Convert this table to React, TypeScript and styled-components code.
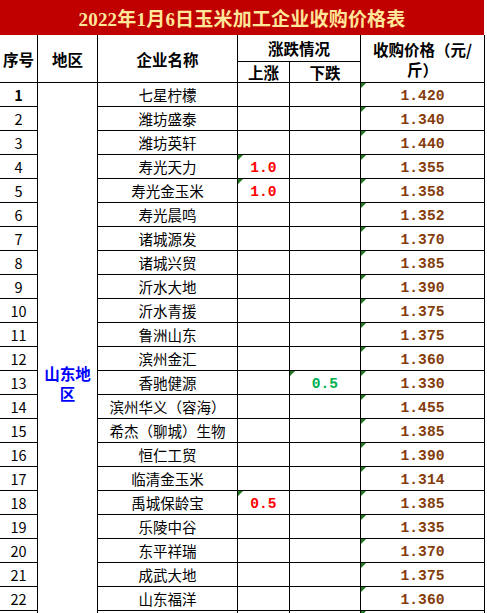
import * as React from 'react';
import styled, { createGlobalStyle, css } from 'styled-components';

const GlobalStyle = createGlobalStyle`
  html, body {
    margin: 0;
    padding: 0;
    background: #ffffff;
  }
  body {
    font-family: "Noto Sans CJK SC", "Noto Sans", sans-serif;
    color: #000000;
    overflow: hidden;
  }
`;

const Sheet = styled.div`
  width: 487px;
  height: 613px;
  overflow: hidden;
`;

const Title = styled.div`
  width: 484px;
  height: 35px;
  background: #c00000;
  color: #ffe699;
  display: flex;
  align-items: center;
  justify-content: center;
  font-family: "Liberation Serif", "Noto Sans CJK SC", serif;
  font-weight: bold;
  font-size: 19px;
  letter-spacing: 0.2px;
`;

const Table = styled.table`
  border-collapse: separate;
  border-spacing: 0;
  table-layout: fixed;
  width: 485px;
`;

const HeadRow = styled.tr<{ $h: number }>`
  height: ${p => p.$h}px;
`;

const Row = styled.tr`
  height: 24px;
`;

const Cell = styled.td<{ $noBottom?: boolean; $flag?: boolean }>`
  position: relative;
  box-sizing: border-box;
  padding: 0;
  border-right: 1px solid #000;
  border-bottom: ${p => (p.$noBottom ? 'none' : '1px solid #000')};
  text-align: center;
  vertical-align: middle;
  white-space: nowrap;
  font-size: 14.5px;
  line-height: 20px;
  ${p =>
    p.$flag &&
    css`
      &::before {
        content: '';
        position: absolute;
        top: 0;
        left: 0;
        border-top: 5px solid #1f7a1f;
        border-right: 5px solid transparent;
      }
    `}
`;

const HeadCell = styled(Cell)`
  font-weight: bold;
  font-size: 15.5px;
  white-space: normal;
`;

const NumCell = styled(Cell)<{ $bold?: boolean }>`
  font-family: "Noto Sans CJK SC", sans-serif;
  font-size: 14.5px;
  font-weight: ${p => (p.$bold ? 'bold' : 'normal')};
`;

const RegionCell = styled(Cell)`
  color: #0000ff;
  font-weight: bold;
  font-size: 15.5px;
  white-space: normal;
  padding: 0 1px;
`;

const ValueCell = styled(Cell)<{ $tone: 'up' | 'down' | 'price' }>`
  font-family: "Liberation Mono", "DejaVu Sans Mono", monospace;
  font-weight: bold;
  font-size: 14.6px;
  padding-top: 3px;
  color: ${p => (p.$tone === 'up' ? '#ff0000' : p.$tone === 'down' ? '#00b050' : '#843c0c')};
`;

interface Company {
  name: string;
  up?: string;
  down?: string;
  price: string;
}

const companies: Company[] = [
  { name: '七星柠檬', price: '1.420' },
  { name: '潍坊盛泰', price: '1.340' },
  { name: '潍坊英轩', price: '1.440' },
  { name: '寿光天力', up: '1.0', price: '1.355' },
  { name: '寿光金玉米', up: '1.0', price: '1.358' },
  { name: '寿光晨鸣', price: '1.352' },
  { name: '诸城源发', price: '1.370' },
  { name: '诸城兴贸', price: '1.385' },
  { name: '沂水大地', price: '1.390' },
  { name: '沂水青援', price: '1.375' },
  { name: '鲁洲山东', price: '1.375' },
  { name: '滨州金汇', price: '1.360' },
  { name: '香驰健源', down: '0.5', price: '1.330' },
  { name: '滨州华义（容海）', price: '1.455' },
  { name: '希杰（聊城）生物', price: '1.385' },
  { name: '恒仁工贸', price: '1.390' },
  { name: '临清金玉米', price: '1.314' },
  { name: '禹城保龄宝', up: '0.5', price: '1.385' },
  { name: '乐陵中谷', price: '1.335' },
  { name: '东平祥瑞', price: '1.370' },
  { name: '成武大地', price: '1.375' },
  { name: '山东福洋', price: '1.360' },
];

// rows below the visible edge: only their borders show at the bottom
const hiddenRows = 3;

export default function App() {
  const total = companies.length + hiddenRows;
  return (
    <Sheet>
      <GlobalStyle />
      <Title>2022年1月6日玉米加工企业收购价格表</Title>
      <Table>
        <colgroup>
          <col style={{ width: 38 }} />
          <col style={{ width: 60 }} />
          <col style={{ width: 140 }} />
          <col style={{ width: 52 }} />
          <col style={{ width: 71 }} />
          <col style={{ width: 124 }} />
        </colgroup>
        <thead>
          <HeadRow $h={27}>
            <HeadCell rowSpan={2}>序号</HeadCell>
            <HeadCell rowSpan={2}>地区</HeadCell>
            <HeadCell rowSpan={2}>企业名称</HeadCell>
            <HeadCell colSpan={2}>涨跌情况</HeadCell>
            <HeadCell rowSpan={2}>收购价格（元/<br />斤）</HeadCell>
          </HeadRow>
          <HeadRow $h={20}>
            <HeadCell>上涨</HeadCell>
            <HeadCell>下跌</HeadCell>
          </HeadRow>
        </thead>
        <tbody>
          {companies.map((c, i) => (
            <Row key={i}>
              <NumCell $bold={i === 0}>{i + 1}</NumCell>
              {i === 0 && <RegionCell rowSpan={total}>山东地区</RegionCell>}
              <Cell>{c.name}</Cell>
              <ValueCell $tone="up" $flag={!!c.up}>{c.up}</ValueCell>
              <ValueCell $tone="down" $flag={!!c.down}>{c.down}</ValueCell>
              <ValueCell $tone="price" $flag>{c.price}</ValueCell>
            </Row>
          ))}
          {Array.from({ length: hiddenRows }).map((_, i) => (
            <Row key={`h${i}`}>
              <NumCell />
              <Cell />
              <ValueCell $tone="up" />
              <ValueCell $tone="down" />
              <ValueCell $tone="price" $flag />
            </Row>
          ))}
        </tbody>
      </Table>
    </Sheet>
  );
}
